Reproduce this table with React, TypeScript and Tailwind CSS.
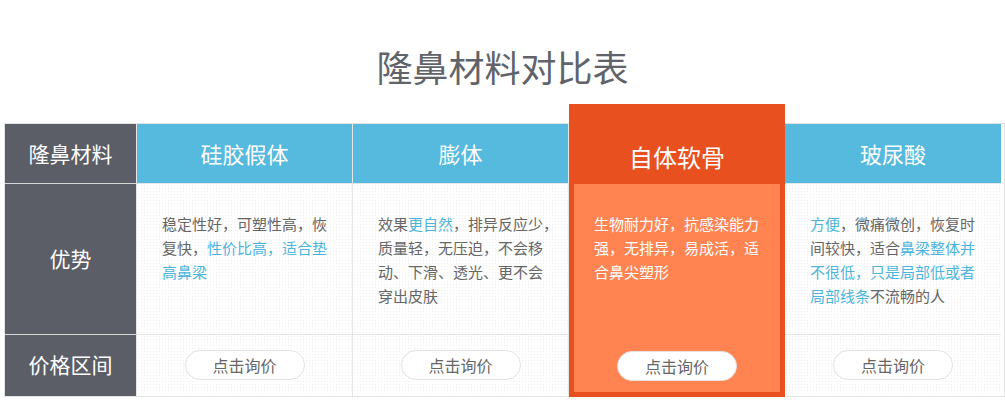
import React from "react";

const font = { fontFamily: '"Noto Sans CJK SC", "Noto Sans", sans-serif' };

const dots =
  "bg-white bg-[radial-gradient(circle,#efefef_1px,transparent_1px)] bg-size-[3px_3px]";

function B({ children }: { children: React.ReactNode }) {
  return <span className="text-[#4db5dd]">{children}</span>;
}

function PriceBtn() {
  return (
    <div className="w-[120px] h-[30px] rounded-full border border-[#e2e2e2] bg-white flex items-center justify-center text-[16px] text-[#666] leading-none">
      点击询价
    </div>
  );
}

function Col({
  title,
  lines,
  last,
}: {
  title: string;
  lines: React.ReactNode[];
  last?: boolean;
}) {
  return (
    <div className={`w-[216px] flex flex-col ${last ? "" : "border-r border-[#e6e6e6]"}`}>
      <div className="h-[60px] bg-[#55badd] flex items-center justify-center text-white text-[22px] border-b border-[#e6e6e6]">
        {title}
      </div>
      <div className={`h-[151px] ${dots} border-b border-[#e6e6e6] pl-[25px] pt-[28px] text-[15px] leading-[24px] text-[#666]`}>
        {lines.map((l, i) => (
          <div key={i} className="whitespace-nowrap">
            {l}
          </div>
        ))}
      </div>
      <div className={`h-[60px] ${dots} flex items-center justify-center`}>
        <PriceBtn />
      </div>
    </div>
  );
}

export default function App() {
  return (
    <div className="w-[1005px] h-[410px] bg-white overflow-hidden" style={font}>
      <div className="pt-[44px] h-[123px] text-center text-[36px] leading-[44px] text-[#60646a]">
        隆鼻材料对比表
      </div>
      <div className="ml-[4px] w-[1001px] flex border border-[#e3e3e3]">
        <div className="w-[132px] flex flex-col bg-[#5b5e67] border-r border-[#e6e6e6] text-white text-[21px]">
          <div className="h-[60px] flex items-center justify-center border-b border-[#d6d6d6]">隆鼻材料</div>
          <div className="h-[151px] flex items-center justify-center border-b border-[#d6d6d6]">优势</div>
          <div className="h-[60px] flex items-center justify-center">价格区间</div>
        </div>
        <Col
          title="硅胶假体"
          lines={[
            "稳定性好，可塑性高，恢",
            <>
              复快，<B>性价比高，适合垫</B>
            </>,
            <B>高鼻梁</B>,
          ]}
        />
        <Col
          title="膨体"
          lines={[
            <>
              效果<B>更自然</B>，排异反应少，
            </>,
            "质量轻，无压迫，不会移",
            "动、下滑、透光、更不会",
            "穿出皮肤",
          ]}
        />
        <div className="w-[216px] -mt-[20px] mb-[-1px] relative z-10 bg-[#e9501f] flex flex-col px-[5px] pb-[5px]">
          <div className="h-[80px] flex items-start justify-center pt-[38px] text-white text-[24px] leading-[29px]">
            自体软骨
          </div>
          <div className="flex-1 bg-[#ff8452] flex flex-col">
            <div className="h-[152px] pl-[20px] pt-[28px] text-[15px] leading-[24px] text-white">
              <div className="whitespace-nowrap">生物耐力好，抗感染能力</div>
              <div className="whitespace-nowrap">强，无排异，易成活，适</div>
              <div className="whitespace-nowrap">合鼻尖塑形</div>
            </div>
            <div className="h-[56px] flex items-start justify-center pt-[15px]">
              <PriceBtn />
            </div>
          </div>
        </div>
        <Col
          last
          title="玻尿酸"
          lines={[
            <>
              <B>方便</B>，微痛微创，恢复时
            </>,
            <>
              间较快，适合<B>鼻梁整体并</B>
            </>,
            <B>不很低，只是局部低或者</B>,
            <>
              <B>局部线条</B>不流畅的人
            </>,
          ]}
        />
      </div>
    </div>
  );
}
